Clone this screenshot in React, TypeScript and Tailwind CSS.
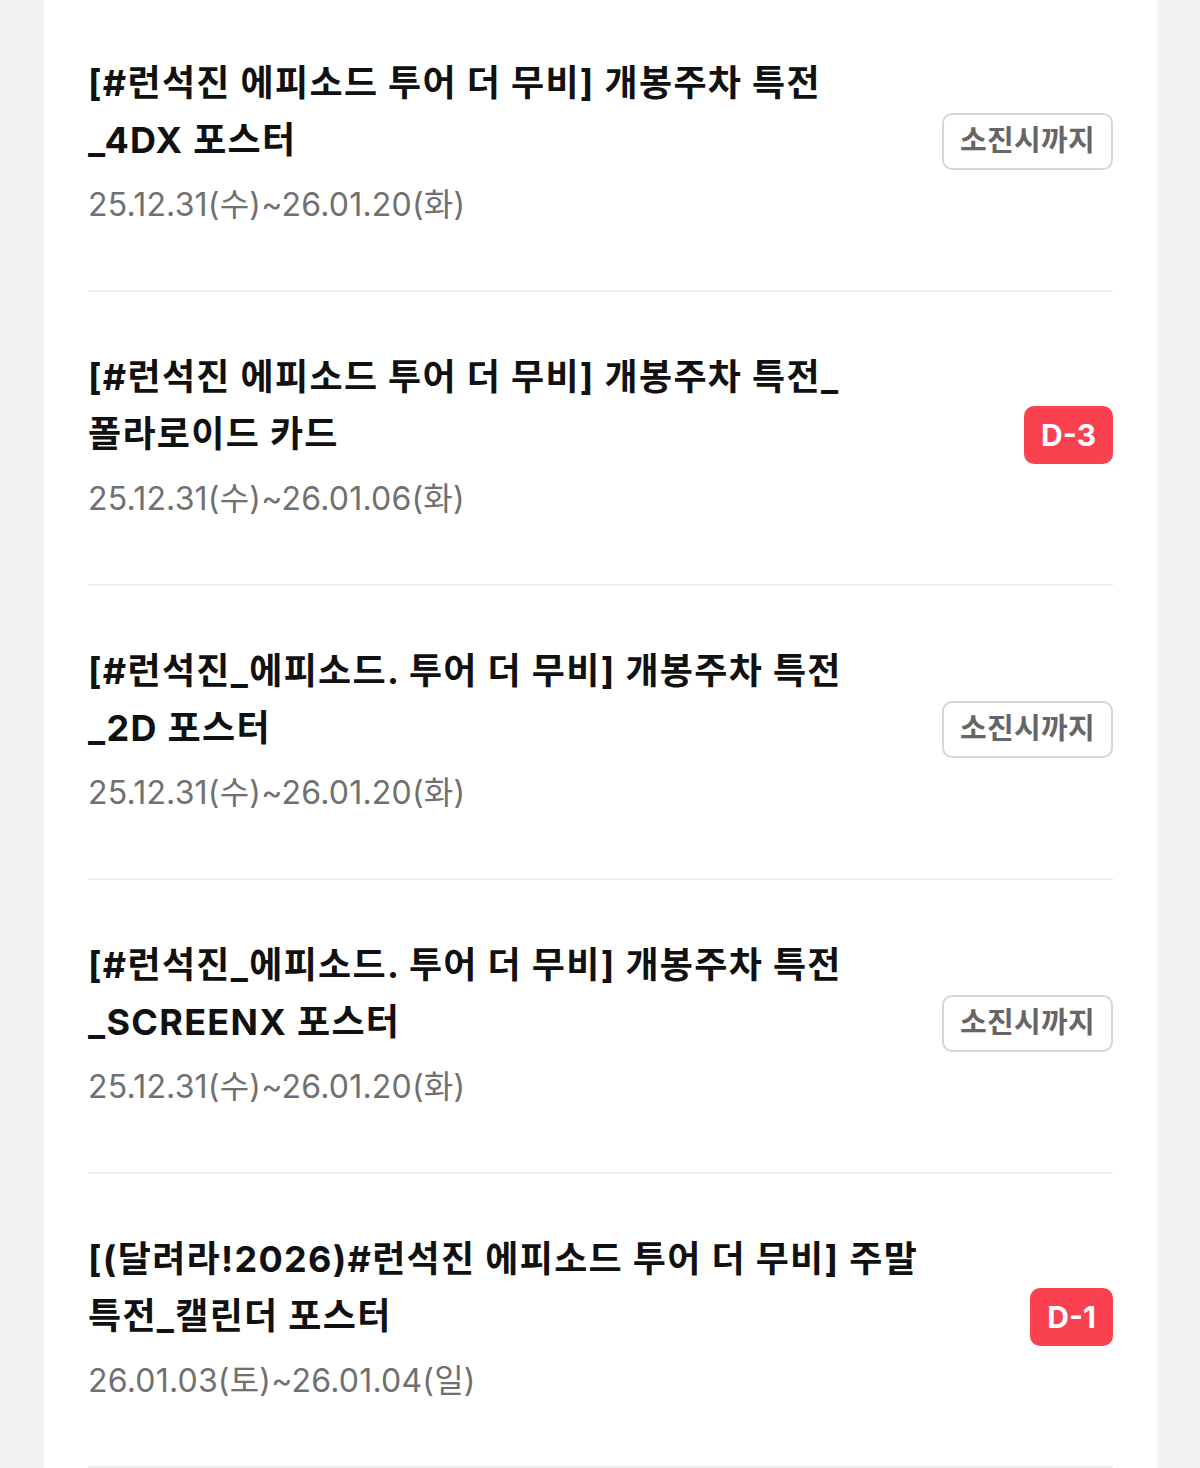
type Badge = { kind: 'stock' } | { kind: 'dday'; label: string };

interface Benefit {
  id: number;
  title: string[];
  period: string;
  badge: Badge;
}

// titles are kept in the same two lines the list shows them in
const benefits: Benefit[] = [
  {
    id: 1,
    title: ['[#런석진 에피소드 투어 더 무비] 개봉주차 특전', '_4DX 포스터'],
    period: '25.12.31(수)~26.01.20(화)',
    badge: { kind: 'stock' },
  },
  {
    id: 2,
    title: ['[#런석진 에피소드 투어 더 무비] 개봉주차 특전_', '폴라로이드 카드'],
    period: '25.12.31(수)~26.01.06(화)',
    badge: { kind: 'dday', label: 'D-3' },
  },
  {
    id: 3,
    title: ['[#런석진_에피소드. 투어 더 무비] 개봉주차 특전', '_2D 포스터'],
    period: '25.12.31(수)~26.01.20(화)',
    badge: { kind: 'stock' },
  },
  {
    id: 4,
    title: ['[#런석진_에피소드. 투어 더 무비] 개봉주차 특전', '_SCREENX 포스터'],
    period: '25.12.31(수)~26.01.20(화)',
    badge: { kind: 'stock' },
  },
  {
    id: 5,
    title: ['[(달려라!2026)#런석진 에피소드 투어 더 무비] 주말', '특전_캘린더 포스터'],
    period: '26.01.03(토)~26.01.04(일)',
    badge: { kind: 'dday', label: 'D-1' },
  },
];

const StatusBadge = ({ badge }: { badge: Badge }) => {
  if (badge.kind === 'stock') {
    return (
      <span className="flex h-[57px] shrink-0 items-center rounded-[10px] border-2 border-[#d6d6d6] px-[16px] text-[29px] font-bold tracking-[0.3px] text-[#666666]">
        소진시까지
      </span>
    );
  }
  return (
    <span className="flex h-[58px] shrink-0 items-center rounded-[10px] bg-[#f9414f] px-[17px] text-[30px] font-bold text-white">
      {badge.label}
    </span>
  );
};

export default function App() {
  return (
    <div
      className="min-h-[1468px] overflow-hidden bg-[#f2f2f2] pl-[44px]"
      style={{ fontFamily: 'Inter, "Noto Sans CJK KR", sans-serif' }}
    >
      <ul className="w-[1113px] bg-white px-[44px]">
        {benefits.map((item, index) => (
          <li
            key={item.id}
            className={`flex items-center justify-between gap-[40px] border-b-2 border-[#eeeeee] pb-[63px] ${
              index === 0 ? 'pt-[55px]' : 'pt-[57px]'
            }`}
          >
            <div className="min-w-0 flex-1">
              <p className="text-[36px] leading-[57px] font-bold tracking-[1.3px] whitespace-nowrap text-[#111111]">
                {item.title.map((line) => (
                  <span key={line} className="block">
                    {line}
                  </span>
                ))}
              </p>
              <p className="mt-[14px] text-[32px] leading-[44px] tracking-[0.2px] text-[#707070]">
                {item.period}
              </p>
            </div>
            <StatusBadge badge={item.badge} />
          </li>
        ))}
      </ul>
    </div>
  );
}
